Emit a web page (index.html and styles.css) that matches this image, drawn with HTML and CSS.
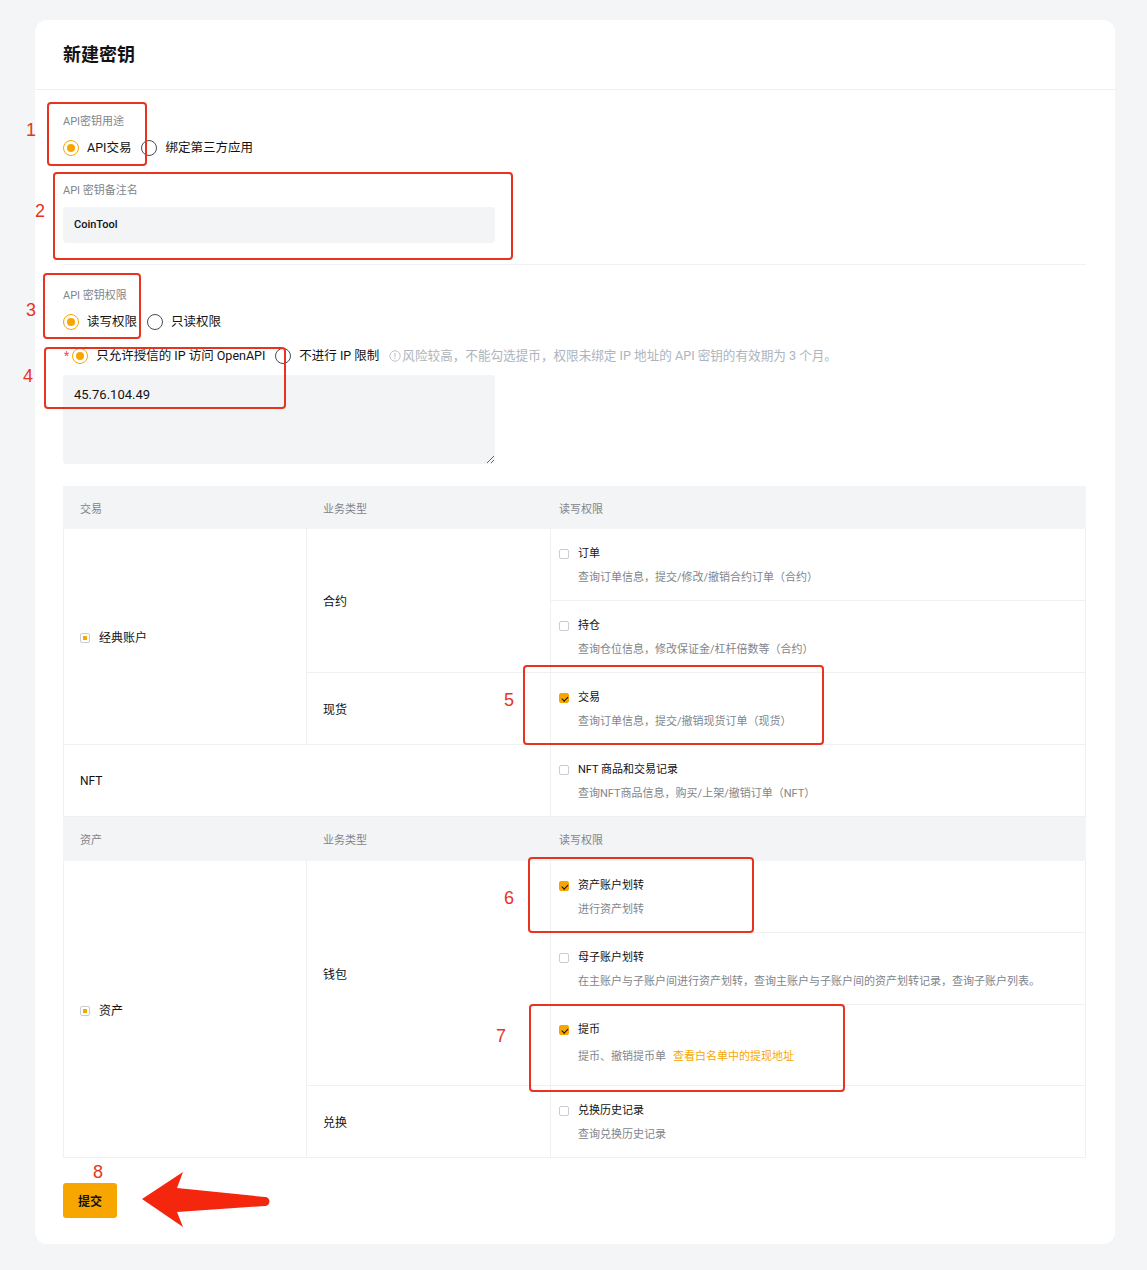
FILE: index.html
```html
<!DOCTYPE html>
<html lang="zh-CN">
<head>
<meta charset="utf-8">
<title>新建密钥</title>
<link rel="stylesheet" href="styles.css">
</head>
<body>
<div class="page">
  <div class="card">
    <div class="card-head"><h1>新建密钥</h1></div>
    <div class="card-body">
      <div class="label l-usage">API密钥用途</div>
      <div class="radios">
        <span class="radio on"><span class="dot"></span>API交易</span>
        <span class="radio"><span class="dot"></span>绑定第三方应用</span>
      </div>

      <div class="label l-name">API 密钥备注名</div>
      <div class="input">CoinTool</div>

      <div class="divider"></div>

      <div class="label l-perm">API 密钥权限</div>
      <div class="radios">
        <span class="radio on"><span class="dot"></span>读写权限</span>
        <span class="radio"><span class="dot"></span>只读权限</span>
      </div>

      <div class="radios ip-row">
        <span class="star">*</span>
        <span class="radio on"><span class="dot"></span>只允许授信的 IP 访问 OpenAPI</span>
        <span class="radio"><span class="dot"></span>不进行 IP 限制</span>
        <span class="hint"><svg class="hint-ic" viewBox="0 0 12 12" width="12" height="12"><circle cx="6" cy="6" r="5.2" fill="none" stroke="#b7bdc6" stroke-width="0.9"/><path d="M6 3.2v3.6" stroke="#b7bdc6" stroke-width="1" stroke-linecap="round"/><circle cx="6" cy="8.7" r="0.6" fill="#b7bdc6"/></svg>风险较高，不能勾选提币，权限未绑定 IP 地址的 API 密钥的有效期为 3 个月。</span>
      </div>
      <textarea class="ips" readonly>45.76.104.49</textarea>

      <table class="perm">
        <colgroup><col class="c1"><col class="c2"><col class="c3"></colgroup>
        <tr class="hrow hrow1">
          <th>交易</th><th>业务类型</th><th class="h3">读写权限</th>
        </tr>
        <tr>
          <td rowspan="3" class="grp"><span class="cb ind"></span>经典账户</td>
          <td rowspan="2" class="biz">合约</td>
          <td class="pc">
            <div class="ck-title"><span class="cb"></span>订单</div>
            <div class="ck-desc">查询订单信息，提交/修改/撤销合约订单（合约）</div>
          </td>
        </tr>
        <tr>
          <td class="pc">
            <div class="ck-title"><span class="cb"></span>持仓</div>
            <div class="ck-desc">查询仓位信息，修改保证金/杠杆倍数等（合约）</div>
          </td>
        </tr>
        <tr>
          <td class="biz">现货</td>
          <td class="pc">
            <div class="ck-title"><span class="cb on"></span>交易</div>
            <div class="ck-desc">查询订单信息，提交/撤销现货订单（现货）</div>
          </td>
        </tr>
        <tr>
          <td colspan="2" class="grp">NFT</td>
          <td class="pc">
            <div class="ck-title"><span class="cb"></span>NFT 商品和交易记录</div>
            <div class="ck-desc">查询NFT商品信息，购买/上架/撤销订单（NFT）</div>
          </td>
        </tr>
        <tr class="hrow hrow2">
          <th>资产</th><th>业务类型</th><th class="h3">读写权限</th>
        </tr>
        <tr>
          <td rowspan="4" class="grp"><span class="cb ind"></span>资产</td>
          <td rowspan="3" class="biz">钱包</td>
          <td class="pc">
            <div class="ck-title"><span class="cb on"></span>资产账户划转</div>
            <div class="ck-desc">进行资产划转</div>
          </td>
        </tr>
        <tr>
          <td class="pc">
            <div class="ck-title"><span class="cb"></span>母子账户划转</div>
            <div class="ck-desc">在主账户与子账户间进行资产划转，查询主账户与子账户间的资产划转记录，查询子账户列表。</div>
          </td>
        </tr>
        <tr>
          <td class="pc tall">
            <div class="ck-title"><span class="cb on"></span>提币</div>
            <div class="ck-desc">提币、撤销提币单<span class="link">查看白名单中的提现地址</span></div>
          </td>
        </tr>
        <tr>
          <td class="biz">兑换</td>
          <td class="pc">
            <div class="ck-title"><span class="cb"></span>兑换历史记录</div>
            <div class="ck-desc">查询兑换历史记录</div>
          </td>
        </tr>
      </table>

      <button class="submit" type="button">提交</button>
    </div>
  </div>

  <div class="annot">
    <div class="box b1"></div>
    <div class="box b2"></div>
    <div class="box b3"></div>
    <div class="box b4"></div>
    <div class="box b5"></div>
    <div class="box b6"></div>
    <div class="box b7"></div>
    <span class="num n1">1</span>
    <span class="num n2">2</span>
    <span class="num n3">3</span>
    <span class="num n4">4</span>
    <span class="num n5">5</span>
    <span class="num n6">6</span>
    <span class="num n7">7</span>
    <span class="num n8">8</span>
    <svg class="arrow" viewBox="0 0 134 64" width="134" height="64"><path d="M2 31 L43 4 L37 20 L125 29 A4.5 4.5 0 0 1 125 38 L37 44 L43 59 Z" fill="#f4260e"/></svg>
  </div>
</div>
</body>
</html>
```
FILE: styles.css
```css
* { box-sizing: border-box; }
html, body { margin: 0; padding: 0; }
body {
  background: #f3f5f7;
  font-family: "Roboto", "Noto Sans CJK SC", sans-serif;
  color: #121214;
}
.page {
  position: relative;
  padding: 20px 32px 26px 35px;
}
.card {
  background: #fff;
  border-radius: 12px;
  width: 1080px;
}
.card-head {
  height: 70px;
  border-bottom: 1px solid #eef0f2;
  display: flex;
  align-items: center;
  padding: 0 28px;
}
.card-head h1 {
  margin: 0;
  font-size: 18px;
  font-weight: 700;
  line-height: 24px;
  color: #121214;
}
.card-body {
  padding: 24px 29px 26px 28px;
  display: flex;
  flex-direction: column;
  align-items: flex-start;
}
.label {
  font-size: 11px;
  line-height: 16px;
  color: #81858c;
}
.l-name { margin-top: 25px; }
.l-perm { margin-top: 23px; }
.radios {
  margin-top: 8px;
  display: flex;
  align-items: center;
  height: 20px;
  gap: 10px;
  font-size: 12.5px;
  color: #121214;
}
.radio {
  display: inline-flex;
  align-items: center;
  gap: 8px;
  line-height: 20px;
}
.dot {
  width: 16px;
  height: 16px;
  border-radius: 50%;
  border: 1px solid #474d57;
  display: inline-flex;
  align-items: center;
  justify-content: center;
}
.radio.on .dot { border-color: #f7a600; }
.radio.on .dot::after {
  content: "";
  width: 8px;
  height: 8px;
  border-radius: 50%;
  background: #f7a600;
}
.input {
  margin-top: 8px;
  width: 432px;
  height: 36px;
  background: #f3f4f6;
  border-radius: 4px;
  padding-left: 11px;
  font-size: 11px;
  font-weight: 500;
  line-height: 36px;
  color: #121214;
}
.divider {
  margin-top: 21px;
  width: 100%;
  height: 1px;
  background: #eef0f2;
}
.ip-row { margin-top: 14px; gap: 0; }
.ip-row .radio { margin-right: 10px; }
.star {
  color: #f6465d;
  font-size: 12px;
  margin: 0 3px 0 1px;
}
.hint {
  display: inline-flex;
  align-items: center;
  font-size: 12.6px;
  color: #aeb4bc;
  line-height: 20px;
}
.hint-ic { margin-right: 1px; }
.ips {
  margin-top: 9px;
  width: 432px;
  height: 89px;
  background: #f3f4f6;
  border: none;
  border-radius: 4px;
  padding: 11px 11px;
  font-family: "Roboto", "Noto Sans CJK SC", sans-serif;
  font-size: 13px;
  line-height: 18px;
  color: #121214;
  outline: none;
  resize: vertical;
}
.perm {
  margin-top: 22px;
  width: 100%;
  border-collapse: collapse;
  table-layout: fixed;
}
.perm .c1 { width: 243px; }
.perm .c2 { width: 244px; }
.perm .c3 { width: auto; }
.perm th {
  background: #f3f4f6;
  height: 44px;
  padding: 0 16px;
  text-align: left;
  font-weight: 400;
  font-size: 11px;
  color: #81858c;
  border: 1px solid #f3f4f6;
}
.perm .hrow1 th { height: 42px; }
.perm th.h3 { padding-left: 8px; }
.perm td {
  border: 1px solid #eff0f2;
  vertical-align: middle;
}
.grp, .biz {
  padding: 0 16px;
  font-size: 12px;
  color: #121214;
}
.grp { white-space: nowrap; }
.grp .cb { margin-right: 9px; vertical-align: -1px; }
.pc {
  padding: 17px 8px 14px 8px;
}
.pc.tall { padding-bottom: 17px; }
.ck-title {
  display: flex;
  align-items: center;
  gap: 9px;
  font-size: 11px;
  line-height: 16px;
  color: #121214;
}
.ck-desc {
  margin-top: 8px;
  padding-left: 19px;
  font-size: 11px;
  line-height: 16px;
  color: #81858c;
}
.tall .ck-desc { line-height: 22px; }
.link {
  color: #f7a600;
  margin-left: 7px;
}
.cb {
  display: inline-block;
  position: relative;
  width: 10px;
  height: 10px;
  border: 1px solid #c9cdd3;
  border-radius: 2px;
  background: #fff;
  flex: none;
}
.cb.ind::after {
  content: "";
  position: absolute;
  left: 2px;
  top: 2px;
  width: 4px;
  height: 4px;
  background: #f7a600;
}
.cb.on {
  background: #f7a600;
  border-color: #f7a600;
}
.cb.on::after {
  content: "";
  position: absolute;
  left: 2.5px;
  top: 0.5px;
  width: 2.5px;
  height: 5px;
  border-right: 1.2px solid #121214;
  border-bottom: 1.2px solid #121214;
  transform: rotate(45deg);
}
.submit {
  margin-top: 25px;
  width: 54px;
  height: 35px;
  background: #f7a600;
  border: none;
  border-radius: 3px;
  font-family: "Roboto", "Noto Sans CJK SC", sans-serif;
  font-size: 12px;
  font-weight: 700;
  color: #121214;
  padding: 0;
}

/* annotation overlay */
.annot {
  position: absolute;
  left: 0;
  top: 0;
  width: 0;
  height: 0;
}
.box {
  position: absolute;
  border: 2px solid #e8331f;
  border-radius: 4px;
}
.b1 { left: 47px; top: 102px; width: 100px; height: 64px; }
.b2 { left: 53px; top: 172px; width: 460px; height: 88px; }
.b3 { left: 43px; top: 273px; width: 98px; height: 66px; }
.b4 { left: 44px; top: 347px; width: 242px; height: 62px; }
.b5 { left: 523px; top: 665px; width: 301px; height: 80px; }
.b6 { left: 528px; top: 857px; width: 226px; height: 76px; }
.b7 { left: 529px; top: 1004px; width: 316px; height: 88px; }
.num {
  position: absolute;
  width: 20px;
  text-align: center;
  font-family: "Liberation Sans", sans-serif;
  font-size: 18px;
  line-height: 18px;
  color: #e8331f;
}
.n1 { left: 21px; top: 121px; }
.n2 { left: 30px; top: 202px; }
.n3 { left: 21px; top: 301px; }
.n4 { left: 18px; top: 367px; }
.n5 { left: 499px; top: 691px; }
.n6 { left: 499px; top: 889px; }
.n7 { left: 491px; top: 1027px; }
.n8 { left: 88px; top: 1163px; }
.arrow {
  position: absolute;
  left: 140px;
  top: 1168px;
}
```
